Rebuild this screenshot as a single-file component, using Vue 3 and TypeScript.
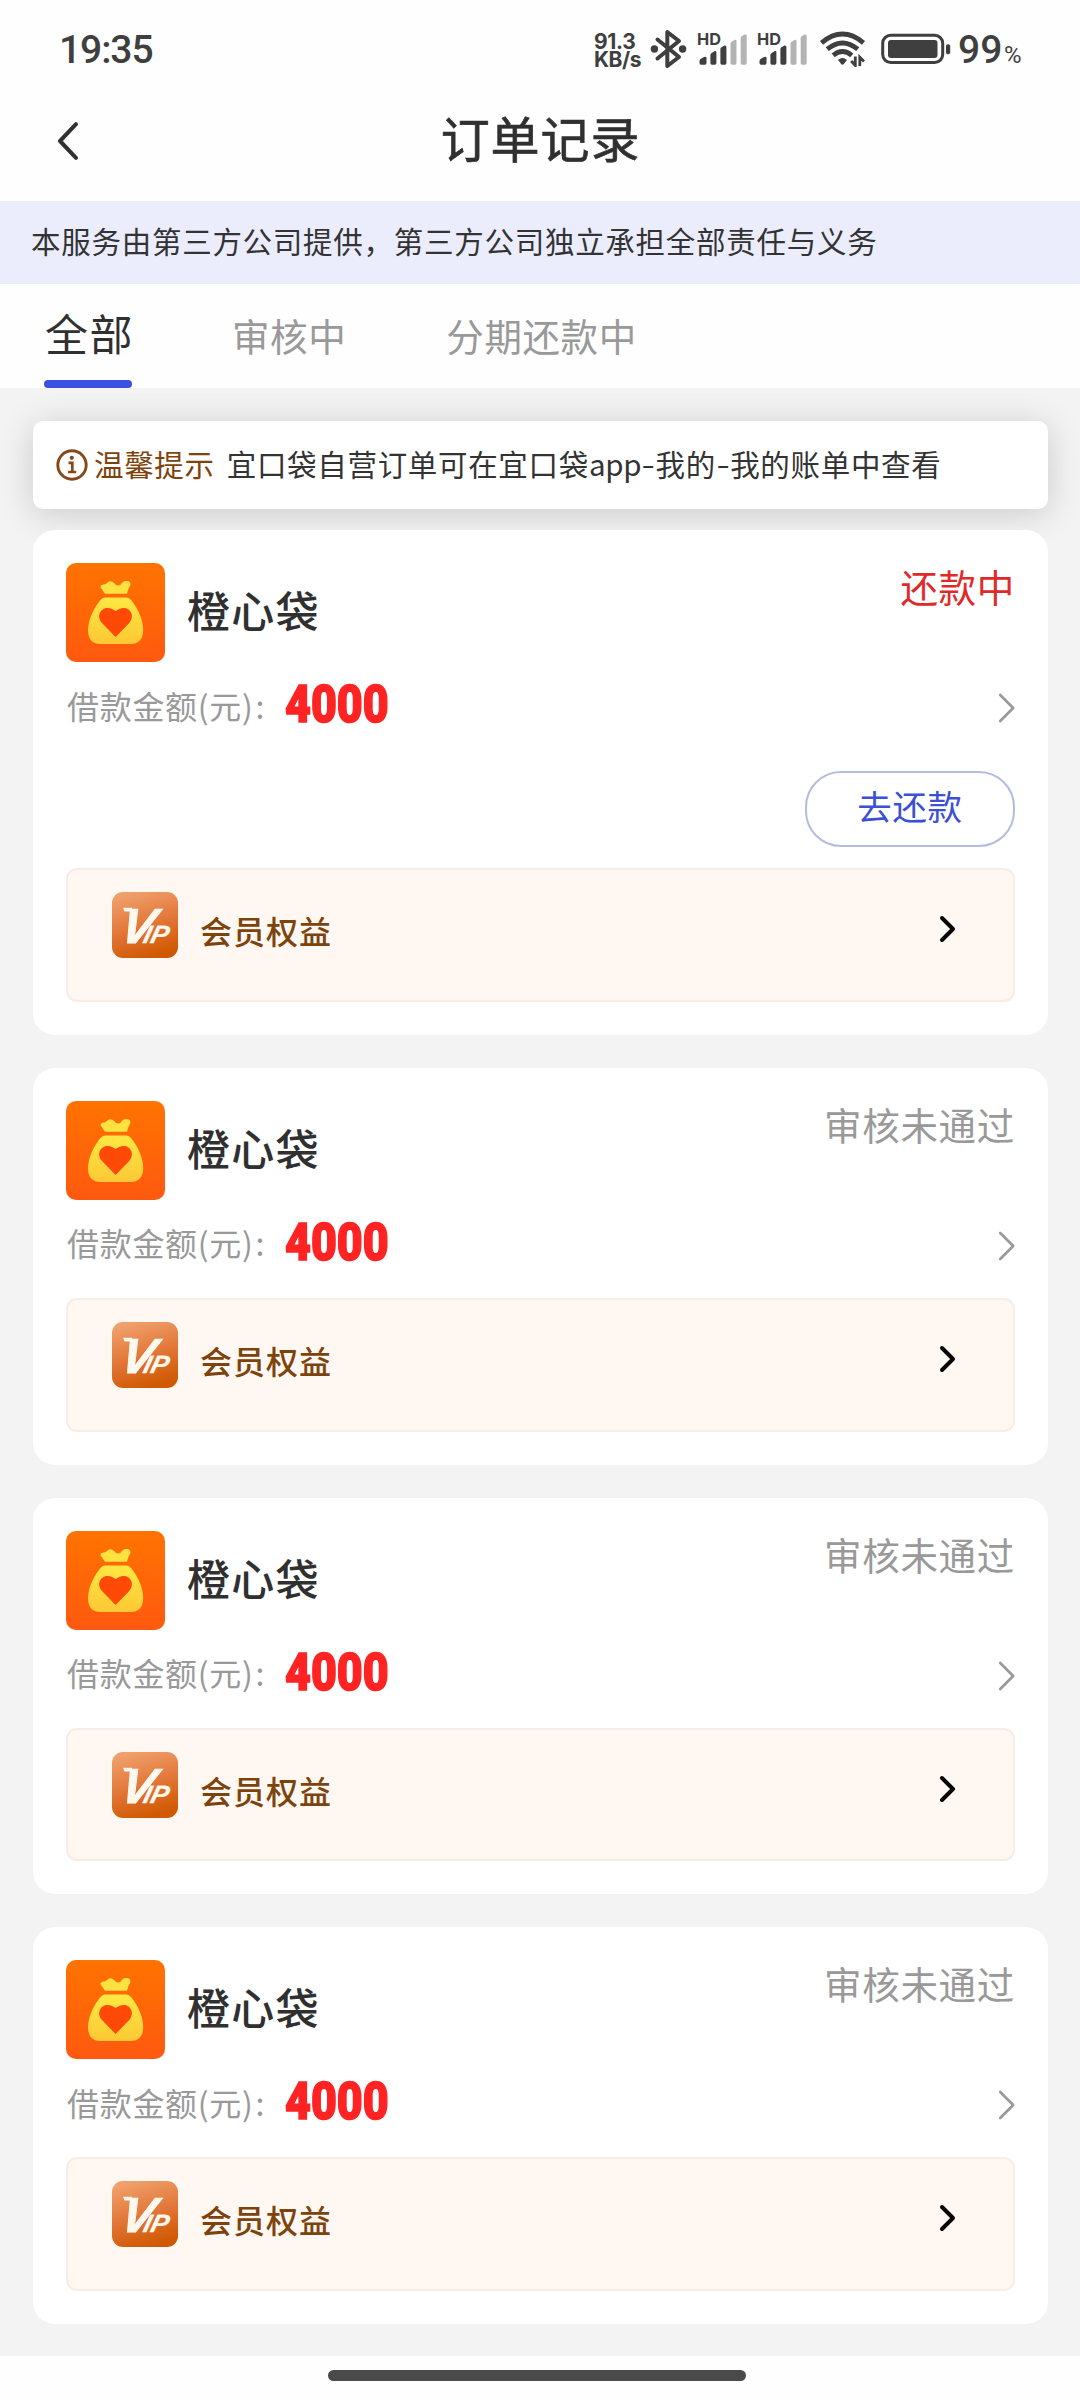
<script setup lang="ts">
interface Order {
  id: number
  name: string
  amount: number
  status: string
  active: boolean
}

const tabs: string[] = ['全部', '审核中', '分期还款中']

const orders: Order[] = [
  { id: 1, name: '橙心袋', amount: 4000, status: '还款中', active: true },
  { id: 2, name: '橙心袋', amount: 4000, status: '审核未通过', active: false },
  { id: 3, name: '橙心袋', amount: 4000, status: '审核未通过', active: false },
  { id: 4, name: '橙心袋', amount: 4000, status: '审核未通过', active: false },
]
</script>

<template>
  <div class="screen">
    <header class="status-bar">
      <span class="clock">19:35</span>
      <div class="indicators">
        <div class="speed"><span class="rate">91.3</span><span class="unit">KB/s</span></div>
        <svg class="bluetooth" width="38" height="42" viewBox="650 28 38 42">
          <path d="M657.5 39.5 L679 57 L667.3 66 V32 L679 41 L657.5 58.5" fill="none" stroke="#3f3f3f" stroke-width="4" stroke-linejoin="round" stroke-linecap="round" />
          <circle cx="654.4" cy="49" r="3.7" fill="#3f3f3f" />
          <circle cx="682.6" cy="49" r="3.7" fill="#3f3f3f" />
        </svg>
        <svg v-for="n in 2" :key="n" class="signal" width="54" height="50" viewBox="693 24 54 50">
          <text x="697" y="45.2" textLength="24" lengthAdjust="spacingAndGlyphs" class="hd">HD</text>
          <g fill="#3f3f3f">
            <path d="M699.5 63 V61 Q699.5 60 700.5 59 L704 57 Q706.5 56 706.5 58 V63 Q706.5 64.7 705 64.7 H701 Q699.5 64.7 699.5 63Z" />
            <path d="M710.4 63 V55 Q710.4 54 711.4 53.2 L714.4 51.3 Q716.4 50.6 716.4 52.5 V63 Q716.4 64.7 714.9 64.7 H711.9 Q710.4 64.7 710.4 63Z" />
            <path d="M720.4 63 V49 Q720.4 48 721.4 47.2 L724.4 45.5 Q726.4 45 726.4 47 V63 Q726.4 64.7 724.9 64.7 H721.9 Q720.4 64.7 720.4 63Z" />
          </g>
          <g fill="#b3b3b3">
            <path d="M730.5 63 V43.5 Q730.5 42.5 731.5 41.7 L734.5 40 Q736.5 39.4 736.5 41.2 V63 Q736.5 64.7 735 64.7 H732 Q730.5 64.7 730.5 63Z" />
            <path d="M740.7 63 V38 Q740.7 37 741.7 36.2 L744.7 34.5 Q746.7 34 746.7 36 V63 Q746.7 64.7 745.2 64.7 H742.2 Q740.7 64.7 740.7 63Z" />
          </g>
        </svg>
        <svg class="wifi" width="46" height="36" viewBox="820 32 46 36">
          <g fill="none" stroke="#3f3f3f" stroke-width="4.8">
            <path d="M821.5 43.8 Q842.5 26.2 863.5 43.8" />
            <path d="M827.2 50.2 Q842.5 37.6 857.8 50.2" />
            <path d="M833.2 56.4 Q842.5 48.8 851.8 56.4" />
          </g>
          <path d="M838 61 Q842.5 57 847 61 L843.8 65 Q842.5 66.4 841.2 65Z" fill="#3f3f3f" />
          <path d="M855.3 57.5 V66.5 L851.2 62 M859.8 67 V58.2 L864 62.4" fill="none" stroke="#3f3f3f" stroke-width="2.8" />
        </svg>
        <svg class="battery" width="70" height="32" viewBox="880 33 70 32">
          <rect x="881.7" y="35.3" width="60" height="27.2" rx="8" fill="none" stroke="#3f3f3f" stroke-width="3" />
          <rect x="887" y="40" width="49.5" height="18" rx="3" fill="#3f3f3f" />
          <rect x="945" y="44.3" width="4.2" height="10" rx="1.8" fill="#3f3f3f" />
        </svg>
        <span class="level">99</span><span class="percent">%</span>
      </div>
    </header>

    <nav class="nav-bar">
      <svg class="back" width="24" height="40" viewBox="0 0 24 40">
        <path d="M20 3.2 L4 20 L20 36.8" fill="none" stroke="#303030" stroke-width="4" stroke-linecap="round" stroke-linejoin="round" />
      </svg>
      <h1 class="title">订单记录</h1>
    </nav>

    <div class="banner">本服务由第三方公司提供，第三方公司独立承担全部责任与义务</div>

    <div class="tabs">
      <div v-for="(tab, i) in tabs" :key="tab" class="tab" :class="{ current: i === 0 }">{{ tab }}</div>
    </div>

    <main class="content">
      <div class="notice">
        <svg class="info" width="32" height="32" viewBox="0 0 32 32">
          <circle cx="16" cy="16" r="14.2" fill="none" stroke="#85481c" stroke-width="2.9" />
          <circle cx="15.8" cy="8.8" r="2.1" fill="#85481c" />
          <path d="M12.5 13.8 H16.3 V22.6 M12 23 H20.2" fill="none" stroke="#85481c" stroke-width="2.7" />
        </svg>
        <span class="notice-label">温馨提示</span>
        <span class="notice-text">宜口袋自营订单可在宜口袋<i class="latin">app</i><i class="dash">-</i>我的<i class="dash">-</i>我的账单中查看</span>
      </div>

      <section v-for="order in orders" :key="order.id" class="card">
        <div class="card-head">
          <svg class="logo" width="99" height="99" viewBox="0 0 99 99">
            <defs>
              <linearGradient :id="'bg' + order.id" x1="0" y1="0" x2="0" y2="1">
                <stop offset="0" stop-color="#ff7300" />
                <stop offset="1" stop-color="#ff5910" />
              </linearGradient>
              <linearGradient :id="'bag' + order.id" x1="0" y1="0" x2="0" y2="1">
                <stop offset="0" stop-color="#ffe843" />
                <stop offset="1" stop-color="#fdc834" />
              </linearGradient>
            </defs>
            <rect width="99" height="99" rx="10" :fill="`url(#bg${order.id})`" />
            <path d="M39 30.8 L34.8 24.8 Q33.8 22.4 36.5 21.8 Q39.5 21.6 41.5 19.4 Q44.5 17 47.5 19.6 Q51 24 54.5 21.8 Q56.5 17.8 60.5 18 Q65.2 18.2 64.3 22.6 Q62.2 25.5 61 30.8 Z" fill="#ffe140" />
            <path d="M39 34.6 H60.5 Q63 34.6 65.5 37.5 C72.5 46.5 77.2 57 77.2 67.5 C77.2 76.5 72 81 65 81 H34 C27 81 22 76.5 22 67.5 C22 57 27 46.5 34 37.5 Q36.5 34.6 39 34.6 Z" :fill="`url(#bag${order.id})`" />
            <path d="M49.6 74 L36 60 C28 51 38.5 39.5 49.6 48 C60.8 39.5 71 51 63.2 60 Z" fill="#ff4a07" />
          </svg>
          <h2 class="name">{{ order.name }}</h2>
          <span class="state" :class="{ due: order.active }">{{ order.status }}</span>
        </div>

        <div class="amount-row">
          <span class="amount-label">借款金额(元)<i class="colon">:</i></span>
          <span class="amount">{{ order.amount }}</span>
          <svg class="more" width="18" height="30" viewBox="0 0 18 30">
            <path d="M2.2 2 L15.2 15 L2.2 28" fill="none" stroke="#999" stroke-width="2.6" stroke-linecap="round" stroke-linejoin="round" />
          </svg>
        </div>

        <div v-if="order.active" class="actions">
          <button class="repay">去还款</button>
        </div>

        <div class="benefit">
          <svg class="vip" width="66" height="66" viewBox="0 0 66 66">
            <defs>
              <linearGradient :id="'vip' + order.id" x1="0.3" y1="0" x2="0.6" y2="1">
                <stop offset="0" stop-color="#f0a06c" />
                <stop offset="0.55" stop-color="#e17434" />
                <stop offset="1" stop-color="#cf5800" />
              </linearGradient>
            </defs>
            <rect width="66" height="66" rx="11" :fill="`url(#vip${order.id})`" />
            <g transform="translate(0 51) skewX(-14)">
              <text x="6" y="0" class="vip-mark">V</text>
              <text x="30" y="0" class="vip-mark vip-small" textLength="25" lengthAdjust="spacingAndGlyphs">IP</text>
            </g>
            <path d="M11 15.8 H20 V19.5 H12.5 Z" fill="#fff8ef" />
          </svg>
          <span class="benefit-text">会员权益</span>
          <svg class="go" width="18" height="28" viewBox="0 0 18 28">
            <path d="M3 3 L14 14 L3 25" fill="none" stroke="#050505" stroke-width="4" stroke-linecap="round" stroke-linejoin="round" />
          </svg>
        </div>
      </section>
    </main>

    <footer class="home"><div class="home-bar"></div></footer>
  </div>
</template>

<style>
body {
  margin: 0;
  background: #fefefe;
}
</style>

<style scoped>
.screen {
  width: 1080px;
  height: 2400px;
  overflow: hidden;
  display: flex;
  flex-direction: column;
  background: #fefefe;
  color: #333;
  font-family: "Noto Sans CJK SC", "Noto Sans", sans-serif;
  white-space: nowrap;
}

.screen > * {
  flex: none;
  box-sizing: border-box;
}

svg {
  display: block;
  flex: none;
}

i {
  font-style: normal;
}

.status-bar {
  height: 98px;
  padding: 0 57px 0 59px;
  display: flex;
  justify-content: space-between;
  align-items: center;
  color: #3f3f3f;
  font-family: Roboto, "Liberation Sans", sans-serif;
}

.clock {
  font-size: 39px;
  font-weight: 500;
  letter-spacing: -1.1px;
  padding-top: 2px;
}

.indicators {
  display: flex;
  align-items: center;
}

.speed {
  width: 56px;
  display: flex;
  flex-direction: column;
  font-family: Inter, sans-serif;
  font-size: 21px;
  font-weight: 700;
  line-height: 18px;
  padding-top: 4px;
}

.rate {
  letter-spacing: -0.3px;
}

.unit {
  letter-spacing: -0.5px;
}

.bluetooth {
  margin-right: 5px;
}

.signal {
  margin-right: 6px;
}

.hd {
  font-family: Inter, sans-serif;
  font-weight: 700;
  font-size: 16.5px;
  fill: #3f3f3f;
}

.wifi {
  margin-left: 7px;
  margin-right: 15px;
}

.battery {
  margin-right: 7px;
}

.level {
  width: 46px;
  padding-top: 2px;
  font-size: 39px;
  font-weight: 500;
}

.percent {
  width: 19px;
  font-size: 24px;
  padding-top: 11px;
}

.nav-bar {
  height: 103px;
  padding: 0 56px 17px;
  display: flex;
  align-items: center;
}

.title {
  flex: 1;
  margin: 0 23px 0 0;
  text-align: center;
  font-size: 49px;
  font-weight: 400;
  -webkit-text-stroke: 0.7px #303030;
  line-height: 60px;
  padding-bottom: 8px;
  letter-spacing: 0.9px;
  color: #303030;
}

.banner {
  height: 83px;
  padding: 0 31px;
  background: #ebedfd;
  font-size: 29.5px;
  letter-spacing: 0.73px;
  line-height: 79px;
}

.tabs {
  height: 104px;
  padding: 0 44px;
  display: flex;
  align-items: stretch;
}

.tab {
  margin-right: 100px;
  box-sizing: border-box;
  padding-top: 3px;
  font-size: 37.5px;
  letter-spacing: 0.6px;
  line-height: 96px;
  color: #999;
}

.tab.current {
  width: 88px;
  display: flex;
  flex-direction: column;
  padding-top: 0;
  font-size: 43px;
  letter-spacing: 1.5px;
  text-indent: 1px;
  color: #303030;
}

.tab.current::after {
  content: "";
  flex: none;
  height: 8px;
  border-radius: 4px;
  background: #3a50e0;
}

.content {
  height: 1968px;
  padding: 33px 32px 0 33px;
  background: #f3f3f3;
}

.notice {
  height: 88px;
  padding: 0 23px;
  display: flex;
  align-items: center;
  border-radius: 10px;
  background: #fff;
  box-shadow: 0 5px 34px rgba(0, 0, 0, 0.17);
  margin-bottom: 21px;
  font-size: 29.5px;
  letter-spacing: 0.68px;
  line-height: 44px;
}

.info {
  margin-right: 6px;
}

.notice-label {
  margin-right: 12px;
  margin-top: -4px;
  color: #7e430d;
}

.notice-text {
  margin-top: -4px;
}

.latin {
  letter-spacing: -0.3px;
}

.dash {
  display: inline-block;
  width: 14.3px;
  text-align: center;
  letter-spacing: 0;
  transform: translateY(-1px) scaleX(1.3);
}

.card {
  padding: 33px;
  margin-bottom: 33px;
  border-radius: 22px;
  background: #fff;
}

.card-head {
  height: 99px;
  display: flex;
  align-items: flex-start;
}

.name {
  margin: 16px auto 0 22px;
  font-size: 43px;
  font-weight: 500;
  line-height: 60px;
  letter-spacing: 1.3px;
  color: #303030;
}

.state {
  margin-top: -3px;
  font-size: 37.5px;
  letter-spacing: 0.7px;
  line-height: 52px;
  color: #999;
}

.state.due {
  color: #e02a2a;
}

.amount-row {
  height: 98px;
  padding: 0 0 6px 1px;
  box-sizing: border-box;
  display: flex;
  align-items: center;
}

.amount-label {
  width: 218px;
  padding-bottom: 7px;
  font-size: 32px;
  letter-spacing: 0.7px;
  line-height: 44px;
  color: #999;
}

.colon {
  margin-left: 2px;
}

.amount {
  width: 104px;
  font-family: Roboto, "Liberation Sans", sans-serif;
  font-size: 52px;
  font-weight: 900;
  line-height: 60px;
  padding-bottom: 6px;
  color: #ff2323;
  -webkit-text-stroke: 1.6px #ff2323;
  transform: scaleX(0.86);
  transform-origin: left center;
}

.more {
  margin-left: auto;
  margin-right: -1px;
}

.actions {
  height: 108.1px;
  display: flex;
  justify-content: flex-end;
  align-items: flex-start;
  padding-top: 11px;
  box-sizing: border-box;
}

.repay {
  width: 210px;
  height: 76px;
  padding: 0 0 7px;
  box-sizing: border-box;
  border: 2px solid #b4bae0;
  border-radius: 36px;
  background: #fff;
  font-family: inherit;
  font-size: 34.5px;
  letter-spacing: 0.7px;
  line-height: 65px;
  color: #3b50d4;
}

.benefit {
  height: 133.8px;
  padding: 22px 56px 0 44px;
  box-sizing: border-box;
  display: flex;
  align-items: flex-start;
  border: 2px solid #f9ece4;
  border-radius: 11px;
  background: #fff7f1;
}

.vip-mark {
  font-family: "Liberation Sans", sans-serif;
  font-weight: 700;
  font-style: italic;
  font-size: 49px;
  fill: #fff8ef;
  stroke: #fff8ef;
  stroke-width: 1px;
}

.vip-small {
  font-size: 25px;
  stroke-width: 0.3px;
}

.benefit-text {
  margin: 15px auto 0 22px;
  font-size: 32px;
  font-weight: 500;
  letter-spacing: 1px;
  line-height: 46px;
  color: #7c430c;
}

.go {
  margin-top: 23px;
}

.home {
  height: 44px;
  padding-top: 14px;
}

.home-bar {
  width: 418px;
  height: 11px;
  margin-left: 328px;
  border-radius: 6px;
  background: #4a4a4a;
}
</style>
